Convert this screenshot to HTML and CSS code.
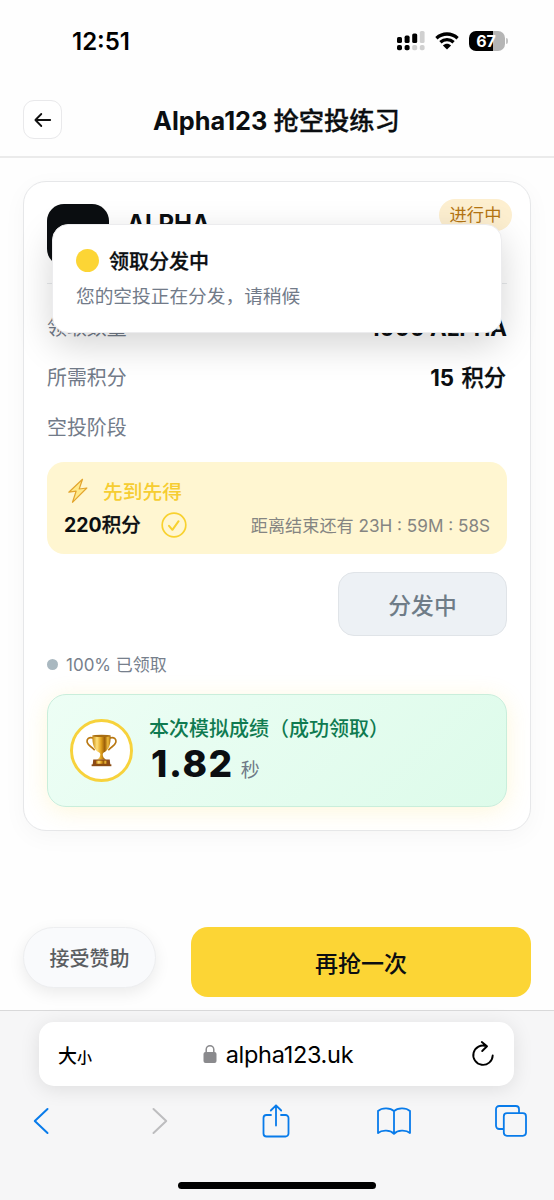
FILE: index.html
```html
<!DOCTYPE html>
<html lang="zh-CN">
<head>
<meta charset="utf-8">
<title>Alpha123 抢空投练习</title>
<link rel="stylesheet" href="styles.css">
</head>
<body>
<div class="screen">
  <div class="status">
    <span class="time">12:51</span>
    <div class="status-icons">
      <svg class="signal" width="28" height="20" viewBox="0 0 28 20">
        <g fill="#000"><rect x="0" y="6" width="5" height="6" rx="1.6"/><rect x="7.6" y="4.6" width="5" height="7.4" rx="1.6"/><rect x="15.2" y="2.4" width="5" height="9.6" rx="1.6"/><rect x="0" y="14" width="5" height="5.2" rx="1.8"/><rect x="7.6" y="14" width="5" height="5.2" rx="1.8"/></g>
        <g fill="#d0d0d0"><rect x="22.8" y="0" width="4.8" height="12" rx="1.6"/><rect x="15.2" y="14" width="5" height="5.2" rx="1.8"/><rect x="22.8" y="14" width="4.8" height="5.2" rx="1.8"/></g>
      </svg>
      <svg class="wifi" width="24" height="18" viewBox="0 0 24 18">
        <path d="M1.4 6.2C7.600.6 16.400.6 22.600 6.200M5.400 10.300c3.900-3.600 9.300-3.600 13.200 0" fill="none" stroke="#000" stroke-width="3.300"/>
        <path d="M7.900 13.400c2.400-2.100 5.800-2.100 8.200 0L12 17.600z" fill="#000"/>
      </svg>
      <div class="battery"><span>67</span></div>
      <i class="battery-tip"></i>
    </div>
  </div>

  <header class="header">
    <button class="back"><svg width="18" height="16" viewBox="0 0 18 16" fill="none" stroke="#111" stroke-width="1.8" stroke-linecap="round" stroke-linejoin="round"><path d="M16.2 8H1.6M7.3 2 1.4 8l5.9 6"/></svg></button>
    <h1>Alpha123 <span class="zh">抢空投练习</span></h1>
  </header>

  <main class="main">
    <section class="card">
      <div class="card-head">
        <div class="logo"></div>
        <div class="token">ALPHA</div>
        <span class="badge">进行中</span>
      </div>
      <div class="row"><span>领取数量</span><b>1000 ALPHA</b></div>
      <div class="row"><span>所需积分</span><b class="points">15 <span class="zh">积分</span></b></div>
      <div class="row"><span>空投阶段</span></div>
      <div class="stage">
        <div class="stage-top">
          <svg width="20" height="26" viewBox="0 0 20 26"><path d="M14.500 1.300 .8 14.200l7.300-1L4.500 24.300 18.800 10l-7.600 1z" fill="#ffe98a" stroke="#e3a52f" stroke-width="1.200" stroke-linejoin="round"/></svg>
          <span>先到先得</span>
        </div>
        <div class="stage-bottom">
          <b>220<span class="zh">积分</span></b>
          <svg width="26" height="26" viewBox="0 0 26 26" fill="none" stroke="#f8d12f" stroke-linecap="round" stroke-linejoin="round"><circle cx="13" cy="13" r="11.8" stroke-width="1.7"/><path d="m8 13.8 3.400 4 6.200-8.600" stroke-width="2"/></svg>
          <span class="countdown">距离结束还有 23H : 59M : 58S</span>
        </div>
      </div>
      <button class="claiming">分发中</button>
      <div class="claimed"><i></i><span>100% 已领取</span></div>
      <div class="result">
        <div class="medal">
          <svg width="31" height="33" viewBox="0 0 32 34">
            <defs>
              <linearGradient id="gold"><stop offset="0" stop-color="#c98a12"/><stop offset=".25" stop-color="#ffe07a"/><stop offset=".48" stop-color="#e0a01c"/><stop offset=".68" stop-color="#9a5d08"/><stop offset=".85" stop-color="#f0bd3c"/><stop offset="1" stop-color="#a8690b"/></linearGradient>
            </defs>
            <path d="M7.500 4.200C3 2.400.4 5.400 1.300 8.800c.9 3.300 4.600 4.200 7.200 7.400M24.500 4.200c4.500-1.800 7.100 1.200 6.200 4.600-.9 3.300-4.600 4.200-7.200 7.400" fill="none" stroke="#b97812" stroke-width="1.700" stroke-linecap="round"/>
            <path d="M6.600 1.500h18.800c.3 9.500-1.800 15-7 17.500-1.500.8-1.200 2.500-.8 4 .2 1.200 1.200 2.300 3.200 3.500h-9.600c2-1.200 3-2.300 3.200-3.500.4-1.500.7-3.200-.8-4-5.200-2.500-7.300-8-7-17.500z" fill="url(#gold)"/>
            <ellipse cx="16" cy="1.900" rx="9.400" ry="1.200" fill="#a86d12"/>
            <path d="M7.500 26.400h17l.7 5.800H6.800z" fill="#8d4a17"/>
            <path d="M10.500 27.500h11v3.200h-11z" fill="url(#gold)"/>
            <path d="M5.800 31.300h20.400v1.900H5.800z" fill="#8a4b12"/>
          </svg>
        </div>
        <div class="score">
          <div class="score-title">本次模拟成绩（成功领取）</div>
          <div class="score-value"><b>1.82</b><span>秒</span></div>
        </div>
      </div>
    </section>
  </main>

  <div class="actions">
    <button class="sponsor">接受赞助</button>
    <button class="again">再抢一次</button>
  </div>

  <footer class="browser">
    <div class="urlbar">
      <span class="size">大<small>小</small></span>
      <div class="address">
        <svg width="14" height="20" viewBox="0 0 14 20"><rect x=".5" y="8" width="13" height="11" rx="2" fill="#8a8a8d"/><path d="M3.200 9V5.500a3.800 3.800 0 0 1 7.600 0V9" fill="none" stroke="#8a8a8d" stroke-width="1.500"/></svg>
        <span>alpha123.uk</span>
      </div>
      <svg class="reload" width="24" height="28" viewBox="0 0 24 28" fill="none" stroke="#000" stroke-width="1.900" stroke-linecap="round" stroke-linejoin="round"><path d="M15.400 6.100A9.700 9.700 0 1 0 21.700 15.500M10.800 2l5.200 4.300-4.800 4.700"/></svg>
    </div>
    <nav class="toolbar">
      <svg height="28" viewBox="0 0 16 28" fill="none" stroke="#087bea" stroke-width="2" stroke-linecap="round" stroke-linejoin="round"><path d="M14.500 2 1.800 14l12.700 12"/></svg>
      <svg height="28" viewBox="0 0 16 28" fill="none" stroke="#bdbdbf" stroke-width="2" stroke-linecap="round" stroke-linejoin="round"><path d="m2.500 2 12.700 12L2.500 26"/></svg>
      <svg height="34" viewBox="0 0 28 34" fill="none" stroke="#087bea" stroke-width="1.800" stroke-linecap="round" stroke-linejoin="round"><path d="M9 11H4.500A3 3 0 0 0 1.500 14v15.500a3 3 0 0 0 3 3h19a3 3 0 0 0 3-3V14a3 3 0 0 0-3-3H19M14 21.500V1.500M8.800 6.500 14 1.300l5.200 5.200"/></svg>
      <svg height="28" viewBox="0 0 34 28" fill="none" stroke="#087bea" stroke-width="1.800" stroke-linejoin="round"><path d="M17 4.200C13.500.5 5 .3 1 4v22c4-3.600 12.500-3.200 16 .8 3.500-4 12-4.400 16-.8V4C29 .3 20.500.5 17 4.200zM17 4.200v22.600"/></svg>
      <svg height="32" viewBox="0 0 32 32" fill="none" stroke="#087bea" stroke-width="1.800"><path d="M8.500 24H4.200A3.200 3.200 0 0 1 1 20.800V4.200A3.200 3.200 0 0 1 4.200 1h16.600A3.200 3.200 0 0 1 24 4.200V8"/><rect x="8.800" y="8.200" width="22.200" height="22.600" rx="3.200"/></svg>
    </nav>
    <div class="home"></div>
  </footer>

  <div class="toast">
    <div class="toast-title"><i></i><span class="zh">领取分发中</span></div>
    <p>您的空投正在分发，请稍候</p>
  </div>
</div>
</body>
</html>
```

FILE: styles.css
```css
* { box-sizing: border-box; }
body { margin: 0; background: #fff; color: #0b0e11; font-family: Inter, "Noto Sans CJK SC", sans-serif; }
button { font-family: inherit; padding: 0; margin: 0; color: inherit; }
svg { display: block; flex: none; }
.zh { font-weight: 500; -webkit-text-stroke: .3px currentColor; }
.screen { position: relative; width: 554px; height: 1200px; overflow: hidden; display: flex; flex-direction: column; background: #fefefe; }

.status { height: 84px; padding: 31px 46px 0 72px; display: flex; justify-content: space-between; align-items: flex-start; }
.time { font-size: 24px; line-height: 21px; font-weight: 600; color: #000; }
.status-icons { display: flex; align-items: center; height: 20px; }
.wifi { margin-left: 10px; }
.battery { margin-left: 10px; width: 36px; height: 20px; padding-right: 2px; border-radius: 7px; background: linear-gradient(90deg, #000 67%, #b5b5b5 67%); color: #fff; font-size: 16px; font-weight: 700; line-height: 20px; text-align: center; }
.battery-tip { width: 2px; height: 6px; margin-left: 1px; border-radius: 0 2px 2px 0; background: #c4c4c4; }

.header { height: 74px; flex: none; border-bottom: 2px solid #ebebeb; display: flex; align-items: center; padding: 0 23px; }
.back { width: 39px; height: 39px; border: 1.5px solid #e9e9eb; border-radius: 11px; background: #fff; display: flex; align-items: center; justify-content: center; margin-top: -1px; }
.header h1 { flex: 1; margin: 1px 40px 0 0; text-align: center; font-size: 25.300px; line-height: 36px; font-weight: 700; }

.main { padding: 23px 23px 0; height: 769px; flex: none; }
.card { height: 650px; border: 1px solid #e6e7e9; border-radius: 23px; padding: 22px 23px; box-shadow: 0 6px 24px rgba(0,0,0,.035); background: #fff; }
.card-head { display: flex; height: 80px; border-bottom: 1px solid #e8eaec; }
.logo { width: 62px; height: 62px; border-radius: 17px; background: #0b0e11; }
.token { flex: 1; margin-left: 18px; padding-top: 4px; font-size: 24px; line-height: 32px; font-weight: 700; }
.badge { width: 73px; height: 32px; margin: -5px -5px 0 0; border-radius: 16px; background: #fdefd0; color: #b57512; font-size: 17.300px; line-height: 32px; text-align: center; }
.row { display: flex; justify-content: space-between; height: 30px; margin-bottom: 20px; line-height: 30px; font-size: 19.900px; color: #727b89; }
.row b { font-size: 22.300px; font-weight: 700; color: #0b0e11; }
.row .points { word-spacing: 2px; margin-right: 1px; }
.card-head + .row { margin-top: 29px; }
.row:has(+ .stage) { margin-bottom: 19px; }
.stage { height: 92px; border-radius: 17px; background: #fff6d1; padding: 16px 17px; }
.stage-top { display: flex; height: 26px; align-items: center; padding-left: 4px; font-size: 19.800px; font-weight: 500; color: #f6cd32; }
.stage-top span { margin: -2px 0 0 15px; }
.stage-bottom { display: flex; height: 42px; align-items: center; }
.stage-bottom b { width: 97px; font-size: 19.500px; font-weight: 700; line-height: 26px; }
.countdown { margin-left: auto; font-size: 17.150px; color: #858582; white-space: nowrap; line-height: 26px; margin-top: 1px; }
.claiming { display: block; width: 169px; height: 64px; margin: 18px 0 0 auto; border: 1px solid #e0e4e8; border-radius: 16px; background: #edf1f5; color: #6f7c87; font-size: 22.800px; font-weight: 500; }
.claimed { display: flex; align-items: center; height: 24px; margin-top: 16px; font-size: 17px; line-height: 22px; color: #777f8c; }
.claimed span { margin-top: 1px; }
.claimed i { width: 11px; height: 11px; border-radius: 50%; background: #a9b8c0; margin-right: 8px; }
.result { height: 113px; margin-top: 18px; border: 1.500px solid #c9eedb; border-radius: 19px; background: linear-gradient(135deg, #edfef5, #ddfbea); box-shadow: 0 4px 23px rgba(252,213,53,.18); display: flex; align-items: center; padding-left: 22px; }
.medal { width: 63px; height: 63px; border: 3px solid #f7d23c; border-radius: 50%; background: #fff; display: flex; align-items: center; justify-content: center; }
.score { margin-left: 16px; height: 72px; }
.score-title { font-size: 20px; line-height: 28px; font-weight: 500; color: #0f7a50; white-space: nowrap; }
.score-value { display: flex; align-items: baseline; line-height: 44px; margin-top: -1px; }
.score-value b { font-size: 37px; font-weight: 800; margin-left: 2px; letter-spacing: 1.600px; }
.score-value span { font-size: 19px; margin-left: 7px; color: #6f7986; }

.actions { display: flex; height: 83px; flex: none; padding: 0 23px; justify-content: space-between; }
.sponsor { width: 133px; height: 61px; border: 1px solid #edeef0; border-radius: 31px; background: #f9fafc; box-shadow: 0 5px 16px rgba(0,0,0,.08); color: #5a5d61; font-size: 20px; font-weight: 500; }
.again { width: 340px; height: 70px; border: 0; border-radius: 17px; background: #fcd535; font-size: 23px; font-weight: 500; }

.browser { flex: none; height: 190px; border-top: 1px solid #d9d9da; background: #f6f6f7; padding: 11px 26px 0 24px; }
.urlbar { height: 64px; margin: 0 14px 0 15px; border-radius: 15px; background: #fff; box-shadow: 0 3px 20px rgba(0,0,0,.1); padding: 0 19px; display: flex; align-items: center; justify-content: space-between; color: #000; }
.size { font-size: 19px; font-weight: 500; width: 62px; }
.size small { font-size: 15px; }
.address { display: flex; align-items: center; gap: 9px; font-size: 23.500px; letter-spacing: -.3px; margin-left: 3px; }
.reload { margin-left: 38px; }
.toolbar { display: flex; justify-content: space-between; align-items: center; height: 70px; }
.toolbar svg { width: 34px; }
.home { width: 198px; height: 7px; margin: 26px auto 0; border-radius: 4px; background: #000; transform: translateX(1px); }

.toast { position: absolute; left: 52px; top: 224px; width: 450px; height: 109px; border: 1px solid #ececee; border-radius: 16px; background: #fff; box-shadow: 0 12px 36px rgba(0,0,0,.17); padding: 20px 23px; }
.toast-title { display: flex; align-items: center; height: 30px; font-size: 20px; }
.toast-title i { width: 23px; height: 23px; border-radius: 50%; background: #fcd535; margin-right: 10px; }
.toast p { margin: 8px 0 0; font-size: 18.700px; line-height: 28px; color: #727b89; }
```
